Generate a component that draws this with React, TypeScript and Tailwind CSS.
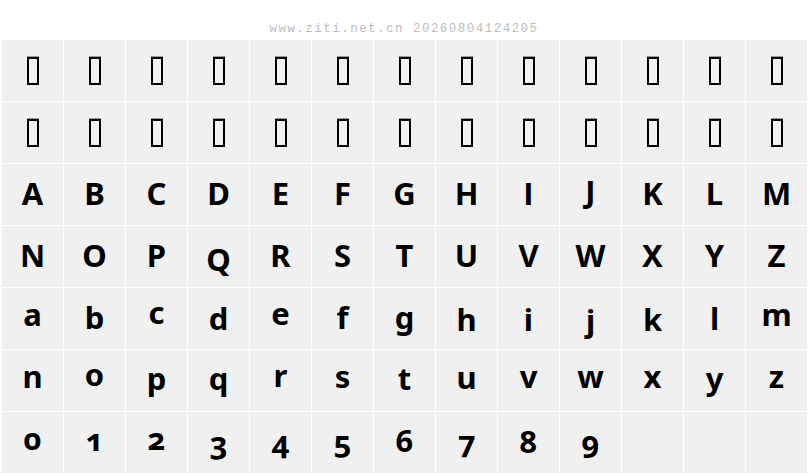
type Glyph = { ch: string; pt: string; font?: string }

const letters: Glyph[][] = [
  [
    { ch: "A", pt: "pt-[13.5px]" },
    { ch: "B", pt: "pt-[13.5px]" },
    { ch: "C", pt: "pt-[13.5px]" },
    { ch: "D", pt: "pt-[13.5px]" },
    { ch: "E", pt: "pt-[13.5px]" },
    { ch: "F", pt: "pt-[13.5px]" },
    { ch: "G", pt: "pt-[13.5px]" },
    { ch: "H", pt: "pt-[13.5px]" },
    { ch: "I", pt: "pt-[13.5px]", font: "font-['Open_Sans',sans-serif]" },
    { ch: "J", pt: "pt-[12px]" },
    { ch: "K", pt: "pt-[13.5px]" },
    { ch: "L", pt: "pt-[13.5px]" },
    { ch: "M", pt: "pt-[13.5px]" },
  ],
  [
    { ch: "N", pt: "pt-[13.5px]" },
    { ch: "O", pt: "pt-[13.5px]" },
    { ch: "P", pt: "pt-[13.5px]" },
    { ch: "Q", pt: "pt-[17.5px]" },
    { ch: "R", pt: "pt-[13.5px]" },
    { ch: "S", pt: "pt-[13.5px]" },
    { ch: "T", pt: "pt-[13.5px]" },
    { ch: "U", pt: "pt-[13.5px]" },
    { ch: "V", pt: "pt-[13.5px]" },
    { ch: "W", pt: "pt-[13.5px]" },
    { ch: "X", pt: "pt-[13.5px]" },
    { ch: "Y", pt: "pt-[13.5px]" },
    { ch: "Z", pt: "pt-[13.5px]" },
  ],
  [
    { ch: "a", pt: "pt-[10.5px]" },
    { ch: "b", pt: "pt-[13.5px]" },
    { ch: "c", pt: "pt-[8.5px]" },
    { ch: "d", pt: "pt-[14.5px]" },
    { ch: "e", pt: "pt-[9.5px]" },
    { ch: "f", pt: "pt-[13.5px]" },
    { ch: "g", pt: "pt-[13.5px]" },
    { ch: "h", pt: "pt-[15.5px]" },
    { ch: "i", pt: "pt-[15.5px]" },
    { ch: "j", pt: "pt-[16.5px]" },
    { ch: "k", pt: "pt-[15.5px]" },
    { ch: "l", pt: "pt-[14.5px]" },
    { ch: "m", pt: "pt-[10.5px]" },
  ],
  [
    { ch: "n", pt: "pt-[10.5px]" },
    { ch: "o", pt: "pt-[8.5px]" },
    { ch: "p", pt: "pt-[12.5px]" },
    { ch: "q", pt: "pt-[12.5px]" },
    { ch: "r", pt: "pt-[9.5px]" },
    { ch: "s", pt: "pt-[10.5px]" },
    { ch: "t", pt: "pt-[12.5px]" },
    { ch: "u", pt: "pt-[11.5px]" },
    { ch: "v", pt: "pt-[10.5px]" },
    { ch: "w", pt: "pt-[10.5px]" },
    { ch: "x", pt: "pt-[10.5px]" },
    { ch: "y", pt: "pt-[12.5px]" },
    { ch: "z", pt: "pt-[10.5px]" },
  ],
  [
    { ch: "0", pt: "pt-[10.5px]" },
    { ch: "1", pt: "pt-[11.5px]" },
    { ch: "2", pt: "pt-[11px]" },
    { ch: "3", pt: "pt-[14.5px]" },
    { ch: "4", pt: "pt-[13.5px]" },
    { ch: "5", pt: "pt-[13.5px]" },
    { ch: "6", pt: "pt-[12.5px]" },
    { ch: "7", pt: "pt-[13.5px]" },
    { ch: "8", pt: "pt-[13.5px]" },
    { ch: "9", pt: "pt-[13.5px]" },
    { ch: "", pt: "" },
    { ch: "", pt: "" },
    { ch: "", pt: "" },
  ],
]

function MissingGlyph() {
  return (
    <div className="flex h-[61px] justify-center bg-[#f0f0f0] pt-[16px]">
      <div className="h-[29px] w-[12px] border-t border-[#9a9a9a]">
        <div className="h-[28px] w-[12px] border-2 border-black bg-[#f2f2f2]" />
      </div>
    </div>
  )
}

function GlyphCell({ glyph }: { glyph: Glyph }) {
  const font = glyph.font ?? "font-['Noto_Sans',sans-serif]"
  return (
    <div
      className={`h-[61px] bg-[#f0f0f0] text-center text-[31px] leading-[31px] font-bold text-black oldstyle-nums ${font} ${glyph.pt}`}
    >
      {glyph.ch}
    </div>
  )
}

export default function App() {
  return (
    <div className="h-[476px] w-[808px] bg-white">
      <div className="h-[40px] pt-[23px] text-center font-['Liberation_Mono',monospace] text-[12.5px] leading-[12.5px] tracking-[1.47px] text-[#bdbdbd]">
        www.ziti.net.cn 20260804124205
      </div>
      <div className="grid grid-cols-[repeat(13,61px)] gap-[1px] pl-[2px]">
        {Array.from({ length: 26 }).map((_, i) => (
          <MissingGlyph key={`tofu-${i}`} />
        ))}
        {letters.flat().map((g, i) => (
          <GlyphCell key={`g-${i}`} glyph={g} />
        ))}
      </div>
    </div>
  )
}
